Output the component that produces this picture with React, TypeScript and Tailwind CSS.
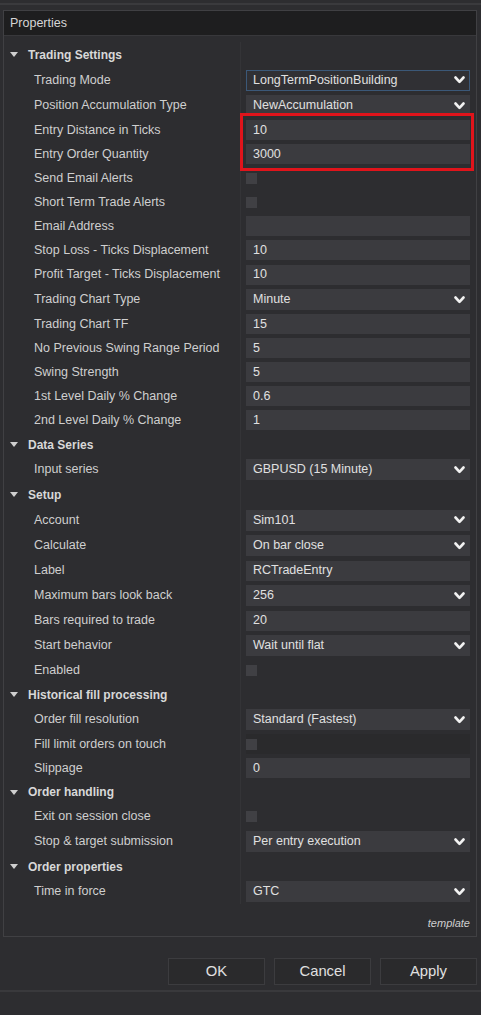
import React from "react";

type Row =
  | { kind: "section"; label: string; h: number }
  | { kind: "text"; label: string; value: string; h: number }
  | { kind: "select"; label: string; value: string; h: number; focused?: boolean }
  | { kind: "check"; label: string; h: number; boxed?: boolean }
  | { kind: "empty"; label: string; h: number };

const rows: Row[] = [
  { kind: "section", label: "Trading Settings", h: 25 },
  { kind: "select", label: "Trading Mode", value: "LongTermPositionBuilding", h: 26, focused: true },
  { kind: "select", label: "Position Accumulation Type", value: "NewAccumulation", h: 25 },
  { kind: "text", label: "Entry Distance in Ticks", value: "10", h: 24 },
  { kind: "text", label: "Entry Order Quantity", value: "3000", h: 24 },
  { kind: "check", label: "Send Email Alerts", h: 24 },
  { kind: "check", label: "Short Term Trade Alerts", h: 24 },
  { kind: "empty", label: "Email Address", h: 24 },
  { kind: "text", label: "Stop Loss - Ticks Displacement", value: "10", h: 24 },
  { kind: "text", label: "Profit Target - Ticks Displacement", value: "10", h: 25 },
  { kind: "select", label: "Trading Chart Type", value: "Minute", h: 25 },
  { kind: "text", label: "Trading Chart TF", value: "15", h: 24 },
  { kind: "text", label: "No Previous Swing Range Period", value: "5", h: 24 },
  { kind: "text", label: "Swing Strength", value: "5", h: 24 },
  { kind: "text", label: "1st Level Daily % Change", value: "0.6", h: 24 },
  { kind: "text", label: "2nd Level Daily % Change", value: "1", h: 24 },
  { kind: "section", label: "Data Series", h: 25 },
  { kind: "select", label: "Input series", value: "GBPUSD (15 Minute)", h: 25 },
  { kind: "section", label: "Setup", h: 25 },
  { kind: "select", label: "Account", value: "Sim101", h: 26 },
  { kind: "select", label: "Calculate", value: "On bar close", h: 25 },
  { kind: "text", label: "Label", value: "RCTradeEntry", h: 25 },
  { kind: "select", label: "Maximum bars look back", value: "256", h: 25 },
  { kind: "text", label: "Bars required to trade", value: "20", h: 25 },
  { kind: "select", label: "Start behavior", value: "Wait until flat", h: 25 },
  { kind: "check", label: "Enabled", h: 24 },
  { kind: "section", label: "Historical fill processing", h: 25 },
  { kind: "select", label: "Order fill resolution", value: "Standard (Fastest)", h: 25 },
  { kind: "check", label: "Fill limit orders on touch", h: 24, boxed: true },
  { kind: "text", label: "Slippage", value: "0", h: 24 },
  { kind: "section", label: "Order handling", h: 24 },
  { kind: "check", label: "Exit on session close", h: 25 },
  { kind: "select", label: "Stop & target submission", value: "Per entry execution", h: 25 },
  { kind: "section", label: "Order properties", h: 25 },
  { kind: "select", label: "Time in force", value: "GTC", h: 25 },
];

function Chevron() {
  return (
    <svg width="11" height="8" viewBox="0 0 11 8" className="shrink-0">
      <polyline points="1.5,1.5 5.5,5.8 9.5,1.5" fill="none" stroke="#f2f2f2" strokeWidth="2.6" strokeLinecap="round" strokeLinejoin="round" />
    </svg>
  );
}

function Triangle() {
  return (
    <svg width="8" height="5" viewBox="0 0 8 5" className="shrink-0">
      <polygon points="0,0 8,0 4,5" fill="#cfcfcf" />
    </svg>
  );
}

function ValueCell({ row }: { row: Row }) {
  if (row.kind === "text") {
    return (
      <div className="h-[20px] w-[224px] bg-[#3b3b3f] flex items-center pl-[7px] text-[#e0e0e0]">
        {row.value}
      </div>
    );
  }
  if (row.kind === "empty") {
    return <div className="h-[20px] w-[224px] bg-[#3b3b3f]" />;
  }
  if (row.kind === "select") {
    return (
      <div
        className={
          row.focused
            ? "h-[21px] w-[224px] bg-[#303034] border border-[#3b5878] flex items-center justify-between pl-[6px] pr-[4px] text-[#e0e0e0]"
            : "h-[21px] w-[224px] bg-[#3b3b3f] flex items-center justify-between pl-[7px] pr-[5px] text-[#e0e0e0]"
        }
      >
        <span>{row.value}</span>
        <Chevron />
      </div>
    );
  }
  if (row.kind === "check") {
    return (
      <div className={row.boxed ? "h-[20px] w-[224px] bg-[#2a2a2c] flex items-center" : "h-[20px] w-[224px] flex items-center"}>
        <div className="w-[11px] h-[11px] bg-[#404044]" />
      </div>
    );
  }
  return null;
}

export default function App() {
  return (
    <div
      className="w-[481px] h-[1015px] bg-[#2d2d30] text-[12.5px] text-[#cfcfcf] relative overflow-hidden"
      style={{ fontFamily: '"Liberation Sans", Arial, sans-serif' }}
    >
      <div className="h-[10px] pt-[3px]">
        <div className="h-[2px] bg-[#3a3a3d]" />
      </div>
      <div className="ml-[3px] w-[474px] border border-[#404043] pb-[3px]">
        <div className="h-[25px] bg-[#1e1e1f] border-b border-[#38383b] flex items-center pl-[6px] text-[#d6d6d6]">
          Properties
        </div>
        <div className="mt-[6px] flex flex-col">
          {rows.map((row, i) => (
            <div key={i} className="flex items-stretch" style={{ height: row.h }}>
              {row.kind === "section" ? (
                <div className="w-[236px] flex items-center pl-[6px] gap-[10px] font-bold text-[12px] text-[#d8d8d8]">
                  <Triangle />
                  <span>{row.label}</span>
                </div>
              ) : (
                <div className="w-[236px] flex items-center pl-[30px] whitespace-nowrap">{row.label}</div>
              )}
              <div className="flex-1 border-l border-[#343437] flex items-center pl-[5px]">
                {row.kind !== "section" && <ValueCell row={row} />}
              </div>
            </div>
          ))}
        </div>
        <div className="mt-[9px] h-[20px] flex items-center justify-end pr-[6px] italic text-[11px] text-[#cfcfcf]">
          template
        </div>
      </div>
      <div className="mt-[21px] flex justify-end gap-[9px] pr-[4px]">
        {["OK", "Cancel", "Apply"].map((b) => (
          <div
            key={b}
            className="w-[97px] h-[27px] bg-[#2a2a2c] border border-[#3c3c3f] flex items-center justify-center text-[14.8px] text-[#e0e0e0]"
          >
            {b}
          </div>
        ))}
      </div>
      <div className="mt-[5px] h-[2px] bg-[#39393c]" />
      <div className="absolute left-[240px] top-[113px] w-[234px] h-[58px] border-[3px] border-[#e0141b]" />
    </div>
  );
}
